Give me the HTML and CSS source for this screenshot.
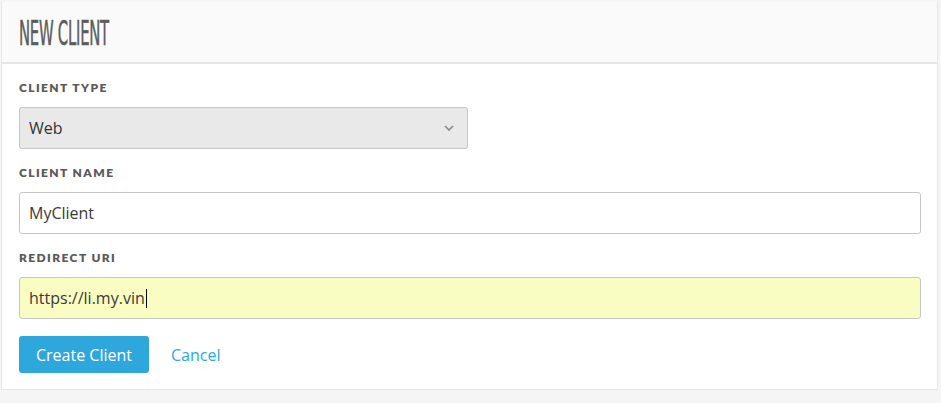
FILE: index.html
```html
<!DOCTYPE html>
<html>
<head>
<meta charset="utf-8">
<link rel="stylesheet" href="styles.css">
</head>
<body>
<div class="card">
  <div class="card-header">
    <h1 class="title">NEW CLIENT</h1>
  </div>
  <form class="card-body">
    <div class="field">
      <label class="label">CLIENT TYPE</label>
      <div class="select">
        <span>Web</span>
        <svg class="chev" width="10" height="6" viewBox="0 0 10 6"><path d="M1 1 L5 5 L9 1" fill="none" stroke="#888" stroke-width="1.6"/></svg>
      </div>
    </div>
    <div class="field">
      <label class="label">CLIENT NAME</label>
      <div class="input">MyClient</div>
    </div>
    <div class="field">
      <label class="label">REDIRECT URI</label>
      <div class="input autofill">https://li.my.vin<span class="caret"></span></div>
    </div>
    <div class="actions">
      <button type="button" class="btn">Create Client</button>
      <a class="cancel">Cancel</a>
    </div>
  </form>
</div>
</body>
</html>
```

FILE: styles.css
```css
html, body {
  margin: 0;
  padding: 0;
  background: #f5f5f5;
}
body {
  padding: 2px 3px 0 1px;
  font-family: "Open Sans", "Liberation Sans", sans-serif;
  color: #333;
}
.card {
  border: 1px solid #e6e6e6;
  border-top: none;
  background: #fff;
}
.card-header {
  background: #fafafa;
  height: 60px;
  border-bottom: 2px solid #e6e6e6;
  display: flex;
  align-items: center;
  padding-left: 17px;
}
.title {
  margin: 0;
  margin-top: 2px;
  font-family: "DejaVu Sans Condensed", "DejaVu Sans", sans-serif;
  font-weight: normal;
  font-size: 33px;
  line-height: 1;
  color: #5c5c5c;
  -webkit-text-stroke: 0.5px #5c5c5c;
  transform: scaleX(0.5);
  transform-origin: left center;
  letter-spacing: -0.5px;
  white-space: nowrap;
}
.card-body {
  padding: 17px 16px 16px 17px;
  display: flex;
  flex-direction: column;
}
.field {
  display: flex;
  flex-direction: column;
}
.label {
  font-family: "Lato", "Open Sans", sans-serif;
  font-weight: 800;
  font-size: 12px;
  letter-spacing: 1.4px;
  color: #5a5a5a;
  line-height: 14px;
  margin-bottom: 12px;
}
.select {
  border: 1px solid #c6c6c6;
  border-radius: 3px;
  background: #e9e9e9;
  display: flex;
  align-items: center;
  justify-content: space-between;
  padding: 0 13px 0 9px;
  box-sizing: border-box;
  width: 449px;
  height: 42px;
  font-size: 16px;
  color: #333;
  margin-bottom: 17px;
}
.input {
  height: 42px;
  box-sizing: border-box;
  border: 1px solid #c6c6c6;
  border-radius: 3px;
  background: #fff;
  display: flex;
  align-items: center;
  padding: 0 9px;
  font-size: 16px;
  color: #3a3a3a;
  margin-bottom: 17px;
}
.autofill {
  background: #fafdc1;
}
.caret {
  display: inline-block;
  width: 1px;
  height: 19px;
  background: #000;
  margin-left: 1px;
}
.actions {
  display: flex;
  align-items: center;
  gap: 22px;
}
.btn {
  height: 37px;
  padding: 0 17px;
  border: none;
  border-radius: 3px;
  background: #2ea8dc;
  color: #fff;
  font-family: "Open Sans", "Liberation Sans", sans-serif;
  font-size: 16px;
}
.cancel {
  color: #2ea8dc;
  font-size: 16px;
}
```
